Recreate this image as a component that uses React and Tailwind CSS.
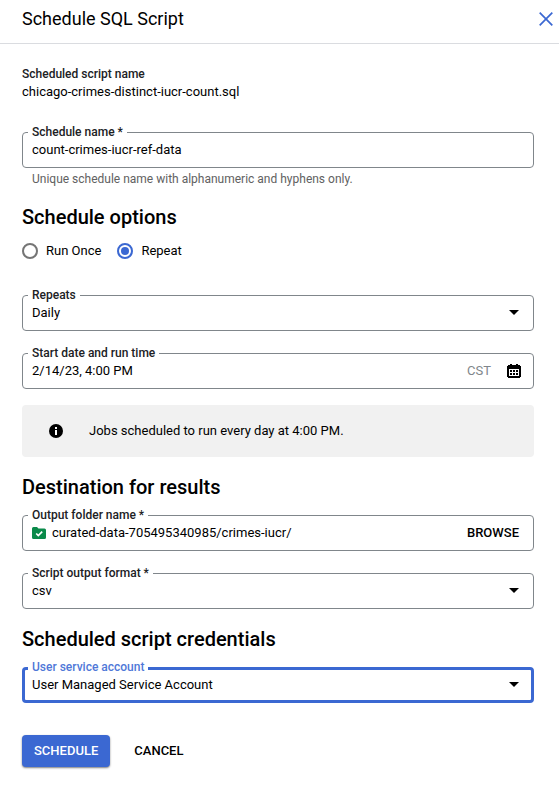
import React, { useState } from "react";

function CloseIcon() {
  return (
    <svg aria-hidden="true" viewBox="0 0 14 14" className="size-3.5">
      <path d="M0.7 0.7 13.3 13.3M13.3 0.7 0.7 13.3" fill="none" stroke="#3b68d2" strokeWidth="1.7" />
    </svg>
  );
}

function CalendarIcon() {
  return (
    <svg aria-hidden="true" viewBox="0 0 14 14" className="size-3.5" shapeRendering="crispEdges">
      <path
        fill="#000"
        fillRule="evenodd"
        d="M3 0h2v1h4V0h2v1h2v1h1v11h-1v1H1v-1H0V2h1V1h2zM2 5v7h10V5z"
      />
      <path
        fill="#000"
        d="M3 6h2v2H3zM6 6h2v2H6zM9 6h2v2H9zM3 9h2v2H3zM6 9h2v2H6zM9 9h2v2H9z"
      />
    </svg>
  );
}

function InfoIcon() {
  return (
    <svg aria-hidden="true" viewBox="0 0 14 14" className="size-3.5">
      <circle cx="7" cy="7" r="7" fill="#000" />
      <path d="M6 3h2v2H6zM6 6h2v5H6z" fill="#fff" />
    </svg>
  );
}

function FolderIcon() {
  return (
    <svg aria-hidden="true" viewBox="0 0 14 12" className="h-3 w-3.5 shrink-0">
      <path
        d="M1.5 0H5l1.5 1.5h6A1.5 1.5 0 0 1 14 3v7.5a1.5 1.5 0 0 1-1.5 1.5h-11A1.5 1.5 0 0 1 0 10.5V1.5A1.5 1.5 0 0 1 1.5 0z"
        fill="#0a8a4a"
      />
      <path d="M4.2 6.5 6.3 8.6 10.2 4.7" fill="none" stroke="#fff" strokeWidth="1.7" />
    </svg>
  );
}

function Field({ id, label, active = false, children }) {
  return (
    <div
      className={
        active
          ? "relative flex h-9 items-center rounded border-3 border-[#3b68d2] pl-[7px]"
          : "relative flex h-9 items-center rounded border border-[#80868b] pl-[9px]"
      }
    >
      <label
        htmlFor={id}
        className={
          active
            ? "absolute -top-3 left-[3px] bg-white px-1 text-xs leading-[18px] font-medium text-[#4f78d8]"
            : "absolute -top-[10px] left-[5px] bg-white px-1 text-xs leading-[18px] font-medium text-[#202124]"
        }
      >
        {label}
      </label>
      {children}
    </div>
  );
}

function SelectField({ id, label, options, active }) {
  return (
    <Field id={id} label={label} active={active}>
      <select id={id} className="w-full appearance-none bg-transparent text-[13px] leading-[18px] outline-none">
        {options.map((option) => (
          <option key={option}>{option}</option>
        ))}
      </select>
      <svg
        aria-hidden="true"
        viewBox="0 0 10 5"
        className={
          active
            ? "pointer-events-none absolute top-3 right-3 h-[5px] w-[10px]"
            : "pointer-events-none absolute top-[14px] right-[14px] h-[5px] w-[10px]"
        }
      >
        <path d="M0 0h10L5 5z" fill="#000" />
      </svg>
    </Field>
  );
}

function Radio({ label, checked, onChange }) {
  return (
    <label className="flex items-center gap-2 leading-[18px]">
      <input
        type="radio"
        name="frequency"
        checked={checked}
        onChange={onChange}
        className="size-4 appearance-none rounded-full border-2 border-[#757575] bg-clip-content p-[2px] checked:border-[#3b68d2] checked:bg-[#3b68d2]"
      />
      {label}
    </label>
  );
}

function Heading({ children }) {
  return <h2 className="mt-[18px] text-xl leading-6 font-medium">{children}</h2>;
}

export default function App() {
  const [frequency, setFrequency] = useState("repeat");

  return (
    <main className="min-h-screen bg-white font-['Roboto',sans-serif] text-[13px] text-black">
      <header className="flex items-center justify-between border-b border-[#dadce0] pt-[7px] pr-[6px] pb-3 pl-[22px]">
        <h1 className="text-lg leading-6">Schedule SQL Script</h1>
        <button type="button" aria-label="Close">
          <CloseIcon />
        </button>
      </header>

      <form className="pt-[21px] pr-[25px] pb-8 pl-[22px]" onSubmit={(event) => event.preventDefault()}>
        <dl className="mb-[31px] leading-[18px]">
          <dt className="text-xs leading-[18px] font-medium text-[#202124]">Scheduled script name</dt>
          <dd>chicago-crimes-distinct-iucr-count.sql</dd>
        </dl>

        <Field id="schedule-name" label="Schedule name *">
          <input
            id="schedule-name"
            type="text"
            defaultValue="count-crimes-iucr-ref-data"
            className="min-w-0 flex-1 leading-[18px] outline-none"
          />
        </Field>
        <p className="mt-[3px] pl-[10px] text-xs leading-4 text-[#616161]">
          Unique schedule name with alphanumeric and hyphens only.
        </p>

        <Heading>Schedule options</Heading>
        <div role="radiogroup" aria-label="Schedule options" className="mt-[13px] mb-[35px] flex gap-4">
          <Radio label="Run Once" checked={frequency === "once"} onChange={() => setFrequency("once")} />
          <Radio label="Repeat" checked={frequency === "repeat"} onChange={() => setFrequency("repeat")} />
        </div>

        <div className="flex flex-col gap-[22px]">
          <SelectField id="repeats" label="Repeats" options={["Daily", "Weekly", "Monthly"]} />
          <Field id="start" label="Start date and run time">
            <input
              id="start"
              type="text"
              defaultValue="2/14/23, 4:00 PM"
              className="min-w-0 flex-1 leading-[18px] outline-none"
            />
            <span className="mr-4 text-[#80868b]">CST</span>
            <button type="button" aria-label="Open calendar" className="mr-3">
              <CalendarIcon />
            </button>
          </Field>
        </div>

        <div className="mt-4 flex h-13 items-center gap-[26px] rounded bg-[#f1f1f1] px-[27px]">
          <InfoIcon />
          <p>Jobs scheduled to run every day at 4:00 PM.</p>
        </div>

        <Heading>Destination for results</Heading>
        <div className="mt-4 flex flex-col gap-[22px]">
          <Field id="folder" label="Output folder name *">
            <FolderIcon />
            <input
              id="folder"
              type="text"
              defaultValue="curated-data-705495340985/crimes-iucr/"
              className="ml-[6px] min-w-0 flex-1 leading-[18px] outline-none"
            />
            <button type="button" className="mr-[14px] font-medium">
              BROWSE
            </button>
          </Field>
          <SelectField id="format" label="Script output format *" options={["csv", "json", "parquet"]} />
        </div>

        <Heading>Scheduled script credentials</Heading>
        <div className="mt-4">
          <SelectField
            id="account"
            label="User service account"
            options={["User Managed Service Account", "System Managed Service Account"]}
            active
          />
        </div>

        <div className="mt-8 flex gap-3">
          <button
            type="submit"
            className="h-8 rounded bg-[#3b68d2] px-3 font-medium text-white shadow-[0_1px_2px_rgba(0,0,0,0.5)]"
          >
            SCHEDULE
          </button>
          <button type="button" className="h-8 px-3 font-medium">
            CANCEL
          </button>
        </div>
      </form>
    </main>
  );
}
